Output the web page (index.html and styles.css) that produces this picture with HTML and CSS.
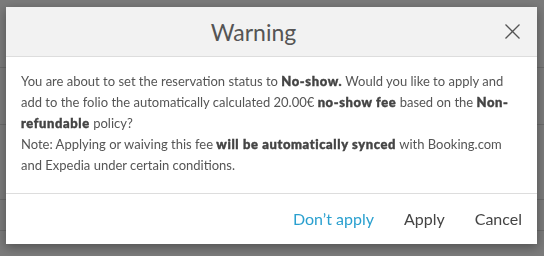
FILE: index.html
```html
<!DOCTYPE html>
<html lang="en">
<head>
  <meta charset="UTF-8">
  <meta name="viewport" content="width=device-width, initial-scale=1">
  <title>Warning</title>
  <link rel="stylesheet" href="styles.css">
</head>
<body>
  <div class="page">
    <div class="row first"></div>
    <div class="row"></div>
    <div class="row tall"></div>
    <div class="row short"></div>
  </div>
  <div class="backdrop"></div>
  <div class="modal">
    <div class="modal-header">
      <div class="modal-title">Warning</div>
      <button class="close-btn" aria-label="Close">
        <svg width="15" height="15" viewBox="0 0 15 15">
          <path d="M0.5 0.5 L14.5 14.5 M14.5 0.5 L0.5 14.5" stroke="#555" stroke-width="1.3" fill="none"/>
        </svg>
      </button>
    </div>
    <div class="modal-body">
      <p>You are about to set the reservation status to <b>No-show.</b> Would you like to apply and add to the folio the automatically calculated 20.00€ <b>no-show fee</b> based on the <b>Non-refundable</b> policy?</p>
      <p>Note: Applying or waiving this fee <b>will be automatically synced</b> with Booking.com and Expedia under certain conditions.</p>
    </div>
    <div class="modal-footer">
      <button class="btn btn-link">Don’t apply</button>
      <button class="btn">Apply</button>
      <button class="btn">Cancel</button>
    </div>
  </div>
</body>
</html>
```

FILE: styles.css
```css
body {
  margin: 0;
  background: #fff;
  font-family: Lato, "Liberation Sans", sans-serif;
  color: #555;
}

.row {
  height: 56px;
  border-bottom: 1px solid #ddd;
}

.row.first {
  height: 67px;
}

.row.tall {
  height: 74px;
}

.row.short {
  height: 30px;
}

.backdrop {
  position: fixed;
  left: 0;
  top: 0;
  width: 100%;
  height: 100%;
  background: rgba(0, 0, 0, 0.52);
}

.modal {
  position: fixed;
  left: 6px;
  top: 7px;
  width: 531px;
  height: 237px;
  background: #fff;
  box-shadow: 0 3px 10px rgba(0, 0, 0, 0.35);
  display: flex;
  flex-direction: column;
}

.modal-header {
  display: flex;
  align-items: center;
  height: 49px;
  padding: 0 17px 0 15px;
  background: #f2f2f2;
  border-bottom: 1px solid #ddd;
}

.modal-title {
  flex: 1;
  text-align: center;
  margin-right: 19px;
  font-size: 23px;
  color: #555;
}

.close-btn {
  border: none;
  background: none;
  padding: 0;
  width: 15px;
  height: 15px;
  display: flex;
}

.modal-body {
  padding: 14px 15px 17px 15px;
  font-size: 13px;
  line-height: 21px;
  color: #555;
  border-bottom: 1px solid #ddd;
}

.modal-body p {
  margin: 0;
}

.modal-body b {
  font-weight: 900;
  color: #444;
  letter-spacing: 0.6px;
  -webkit-text-stroke: 0.4px #444;
}

.modal-footer {
  flex: 1;
  display: flex;
  justify-content: flex-end;
  align-items: center;
  gap: 30px;
  padding: 0 15px 2px 15px;
}

.btn {
  border: none;
  background: none;
  padding: 0;
  font-family: Lato, "Liberation Sans", sans-serif;
  font-size: 16px;
  color: #444;
}

.btn-link {
  color: #2aa0cf;
}
```
